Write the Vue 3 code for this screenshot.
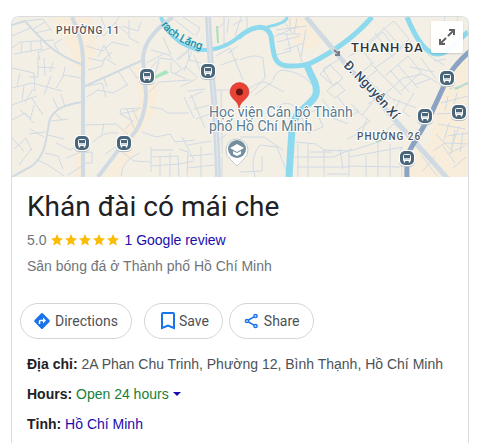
<template>
  <main class="panel">
    <div class="map">
      <svg class="map-canvas" viewBox="12 17 456 160" preserveAspectRatio="xMidYMid slice" role="img" aria-label="Map">
        <rect x="12" y="17" width="456" height="160" fill="#f4efe5" />
        <g fill="#f8edda">
          <path d="M52 17h40l5 35-15 25-12-25zM133 66l25 10-2 35-22 28-14-5 20-30zM75 150l10-4 2 31h-12zM102 177l25-30 8 5-18 25z" />
          <path d="M285 17h25l15 22-16 12-15-9zM448 73l20-14v118h-50l12-39zM400 177l5-30 22 2 25 28z" />
        </g>
        <path d="M154 76l12-6 3 3-14 6z" fill="#a5e6be" />
        <path d="M376 142l6-2M217 26l1 17M455 89l13-6" fill="none" stroke="#a5dfbb" stroke-width="2" />
        <g class="lane">
          <path v-for="(lane, index) in lanes" :key="index" :d="lane" />
        </g>
        <g class="water">
          <path d="M161 17Q166 33 180 42T209 50Q226 48 240 36" stroke-width="4" />
          <path d="M238 38C249 28 266 21 271 36C274 51 271 67 292 66Q304 66 311 63C327 55 350 42 372 17" stroke-width="5" />
          <path d="M267 27Q287 23 287 17" stroke-width="3" />
          <path d="M307 65C311 77 318 84 316 94S294 110 292 129L289 177" stroke-width="7" />
          <path d="M407 17C414 34 424 54 437 54S455 42 468 32" stroke-width="5" />
        </g>
        <g class="road">
          <path d="M12 25L25 21C41 39 53 54 83 65M83 87L143 60M12 177L32 166C48 153 46 133 50 119Q56 105 83 102" stroke-width="2" />
          <path d="M72 17Q84 42 83 64V177M173 17C155 29 144 42 143 58L146 95C145 119 137 134 123 144L98 177" stroke-width="4" />
          <path d="M208 17L211 70Q216 110 218 177" stroke-width="6" />
          <path d="M306 17L343 61L394 119L449 180" stroke-width="5" />
        </g>
        <path d="M208 17l3 53q5 40 7 107" fill="none" stroke="#e3e8ec" />
        <path class="highway" d="M470 51Q454 65 448 77L431 114L411 148Q406 156 407 177" />
        <path d="M334 50l5 4m0-3v4h-4" fill="none" stroke="#778088" stroke-width="2" />

        <g v-for="(stop, index) in busStops" :key="index" :transform="`translate(${stop.x} ${stop.y})`">
          <rect x="-8" y="-7" width="16" height="16" rx="5" fill="#b5c0c6" />
          <rect x="-8" y="-8" width="16" height="16" rx="5" fill="#fff" />
          <rect x="-7" y="-7" width="14" height="14" rx="5" fill="#49657a" />
          <path d="M-3.500 2.500v-5q0-1 1-1h5q1 0 1 1v5z" fill="#49657a" stroke="#fff" />
          <path d="M-3 1h6M-2.500 3v1.500M2.500 3v1.500" stroke="#fff" stroke-width="1.500" />
        </g>

        <g class="district">
          <text x="56" y="34">PHƯỜNG 11</text>
          <text x="357" y="140">PHƯỜNG 26</text>
          <text class="district-large" x="351" y="52">THANH ĐA</text>
        </g>
        <defs>
          <path id="canal-name" d="M161 25Q174 43 205 51" />
          <path id="street-name" d="M343 66L367 90L404 132" />
        </defs>
        <text class="canal-label"><textPath href="#canal-name">rach Lăng</textPath></text>
        <text class="street-label"><textPath href="#street-name">Đ. Nguyễn Xí</textPath></text>

        <path d="M237 166l-7-7q-4-3-4-9a11 11 0 0 1 22 0q0 6-4 9z" fill="#fff" stroke="#c5cbcd" />
        <circle cx="237" cy="149" r="9" fill="#738f9e" />
        <path d="M230 148l7-4 7 4-7 4z" fill="#fff" />
        <path d="M233 151v3l4 2 4-2v-3l-4 2z" fill="#fff" />
        <text class="place-label">
          <tspan x="209" y="117">Học viện Cán bộ Thành</tspan>
          <tspan x="209" y="131">phố Hồ Chí Minh</tspan>
        </text>
        <path d="M239 108c-1-8-9-9-9-16a9.500 9.500 0 0 1 19 0c0 7-8 8-10 16z" fill="#ea4335" stroke="#c5221f" stroke-width=".5" />
        <circle cx="239.500" cy="92" r="3.500" fill="#65140f" />
      </svg>
      <button class="expand" type="button" aria-label="Expand map">
        <svg viewBox="0 0 18 18" width="18" height="18" fill="none" stroke="#5f6368" stroke-width="2">
          <path d="M11 2h5v5M16 2l-6 6M2 11v5h5M2 16l6-6" />
        </svg>
      </button>
    </div>

    <header class="heading">
      <h1>Khán đài có mái che</h1>
      <div class="rating">
        <span>5.0</span>
        <span class="stars" role="img" aria-label="5 stars">
          <svg v-for="n in 5" :key="n" viewBox="0 0 14 14" width="14" height="14">
            <path d="M7 1l1.800 4 4.200.4-3.200 2.800 1 4.300L7 10.200l-3.800 2.300 1-4.300L1 5.400 5.200 5z" fill="#fbbc04" />
          </svg>
        </span>
        <a href="#reviews">1 Google review</a>
      </div>
      <p class="category">Sân bóng đá ở Thành phố Hồ Chí Minh</p>
    </header>

    <div class="actions">
      <button class="action directions" type="button">
        <svg viewBox="0 0 18 18" width="18" height="18">
          <path d="M8 1.600q1-1 2 0L16.400 8q1 1 0 2L10 16.400q-1 1-2 0L1.600 10q-1-1 0-2z" fill="#1a73e8" />
          <path d="M6.500 12V9.500q0-1 1-1H11" fill="none" stroke="#fff" stroke-width="1.500" />
          <path d="M10 5.500l3 3-3 3z" fill="#fff" />
        </svg>
        Directions
      </button>
      <button class="action save" type="button">
        <svg viewBox="0 0 14 18" width="14" height="18">
          <path d="M1 2q0-1 1-1h10q1 0 1 1v14l-6-2.500L1 16z" fill="none" stroke="#1a73e8" stroke-width="2" />
        </svg>
        Save
      </button>
      <button class="action share" type="button">
        <svg viewBox="0 0 16 18" width="16" height="18" fill="none" stroke="#1a73e8" stroke-width="1.500">
          <path d="M4.500 8L10 4.800M4.500 10l5.500 3.200" />
          <circle cx="3" cy="9" r="1.600" />
          <circle cx="11.500" cy="4" r="1.600" />
          <circle cx="11.500" cy="14" r="1.600" />
        </svg>
        Share
      </button>
    </div>

    <div class="details">
      <p><b>Địa chỉ:</b> 2A Phan Chu Trinh, Phường 12, Bình Thạnh, Hồ Chí Minh</p>
      <p><b>Hours:</b> <button class="hours" type="button">Open 24 hours<i class="caret"></i></button></p>
      <p><b>Tỉnh:</b> <a href="#province">Hồ Chí Minh</a></p>
    </div>
  </main>
</template>

<script setup>
const busStops = [
  { x: 147, y: 76 },
  { x: 208, y: 71 },
  { x: 82, y: 143 },
  { x: 124, y: 143 },
  { x: 447, y: 78 },
  { x: 425, y: 116 },
  { x: 459, y: 112 },
  { x: 407, y: 158 },
];

const lanes = [
  // north-west
  "M12 48l8-6 34-2M14 54l28-5-2-8M22 43l-1 10M31 42v10M12 36l18-8M25 21l18-2 9 12M50 48l-12 4 2 8M60 54l-6-10 8-5M33 29l12-7M36 33l15-4",
  "M12 68l22 5 1 18M38 57v20h-9M38 67l17 1M44 58l1 18M53 62l-3 10M12 88l20-5 30 8M20 73l-3 13M24 86l-2 14M56 88l8-13 17 3M65 67l-2 10M44 95l7-19M12 105l25-9",
  "M92 28l12 8 11-13 13 11M101 17l4 10-9 11M115 23l4-6M86 46l17 5 9-9 17 4M98 57l6-12 7 14M88 58l14 3 10-9M129 20v18l10 5M122 26l16 5 3-9M88 70l14-4 3-8 11 7",
  // centre west
  "M88 86l14-3 4 14M104 78l3 9M119 72l9 14M129 67l8 11 7-3M87 97l11-7 15 3 14-8M151 50l18 5 12 13M147 63l16-9M151 68l9-10 13 2M149 92l10-10 32-2M159 61l-4 13M171 62v10l15 7M176 60l13-11",
  "M121 109l20-1M121 109l-1 5 13 7-8 8M127 109l7 20M132 108l7 15M120 114l18-4M150 107l12 2 6 4h21M142 132l14 5 14-3 5 8 20-2M151 147v25M151 150h22M160 157v20M151 157l27-1 1 21M170 153v24M151 166l28-2",
  "M179 149l9 3-1 25M182 137l12 23M188 145l23-4M188 156l25-2M187 168l28-3M201 146v31M179 164l15-3M122 152l12 9 17 1M121 176q1-16 19-23M105 154l17-11M83 125l33-1 12 10M93 142q10-11 25-9M104 123l-2 11",
  // south west
  "M12 120l13-7 9 10M20 110l9 8M31 97l12 18M34 105l-4 15M25 102l8-13M14 149l12-11 6 13M19 165l12-16M37 160l11 5 16 11M45 153l13 3 5 13M56 143l14 7 13-7M51 121l17-2M48 135l16 4M54 112l9 9M58 109l-5-11M65 107l-4-13M29 134l16-2M30 129l14 8M66 158l15-6M68 175l14-9M83 153l9-1v11h-9M12 138l12 13",
  // canal banks
  "M163 37l8 18M175 20l19 15M183 17l17 11-4 8M188 45l1 15 12 3M178 60l13-11 8 4M184 71l8-20M194 55l7 18M174 74l12-7 12 11M180 87l16-8M189 98l14-7M184 97l10 21M191 95l14 33M188 91l17-2M196 119l14-5M194 109l16-4",
  "M224 17v29M229 18l-2 15M216 30l8-7M233 25l10-5M216 56l14-8 13 32M228 53l10-7M221 65l17-6M215 90h25M221 91l1 48M215 143l12-9M222 154v-15M222 177v-20M241 17l-6 19M247 17v11",
  "M274 37l24-11M276 30l31-4M282 19l10 14M290 18v13M297 18l-3 16M276 55l15-4-5-18M284 50l20-7M297 45l5 17M306 29l-5 28M278 34h23M277 42l23-6M273 80q2-8 9-10 21 2 29 14M240 60q15-7 23-2l2 20-14 15M273 81l-18 14M241 96q15-15 24-14l19 10",
  "M255 177q-6-20 5-32l17 2 12 30M240 137h24l19 13M240 172l22-1v-15M277 107q11-8 19 1l-4 12-12-8M301 116l15-6 7 17-15 6zM295 142l21 2 8 6 25 1M298 144v33M308 143v34M324 149v28M349 151v26M295 157h38l19-8M297 167h53M310 152h22M327 174h21M340 149l3 20",
  // east
  "M338 60l-15 9 9 15M320 74l10-9 13 13-9 8zM327 91l10-9 8 8-10 8zM322 99l10 13M337 96l11 14M348 57l13-8 12 14-18 15M363 46l31-25 15 18-12 12-14-19-18 15M383 27l18 20M375 33l18 25",
  "M398 51l13-10M375 68l25-18M385 76l23-20 13 16-20 19M370 63l32 32M361 72l28 28M360 84l17-14M380 99l24-22M398 65l20 23M390 70l19 22M368 104l18-10 9 7M346 119l13-8-8-7M354 109l16 12-14 10M362 115l10-12M333 118l15 6",
  "M347 139l15-7 5-13M359 138l10-5M349 157l54-10M349 166l51 1M366 156v21M378 143v34M390 144v33M401 148l1 29M350 151l44-14M382 136l11-12 16 10M414 93l-11 18 7 6M393 99l23 9M400 100l-8 15M404 78l19-4 15 9M410 67l24 5M414 85l16-6M421 58l15 21M428 55l16 10",
  "M445 17l-5 30M458 17l-7 30M434 61l12-2M449 89l19-5M441 103l27-7M437 114l19-1M448 96l-3 15M457 93l-4 15M438 124l27 5M449 123l-5 17M459 126l-7 20M436 134l17 18M421 155l17 22M433 151l12-8 23 1M447 136l21-3M443 146l12 17M449 153l16-7M453 168l13-11M435 156l-12 15M455 130l-4 24M463 132l-3 20",
];
</script>

<style scoped>
.panel {
  box-sizing: border-box;
  min-height: calc(100vh - 16px);
  margin: 16px 11px 0;
  border: 1px solid #dadce0;
  border-bottom: 0;
  border-radius: 8px 8px 0 0;
  overflow: hidden;
  font: 14px/20px "Liberation Sans", Arial, sans-serif;
  color: #4d5156;
  background: #fff;
}
.map {
  position: relative;
  height: 160px;
}
.map-canvas {
  display: block;
  width: 100%;
  height: 100%;
}
.lane {
  fill: none;
  stroke: #cfdae4;
  stroke-width: 1;
}
.water {
  fill: none;
  stroke: #8dd9ee;
}
.road {
  fill: none;
  stroke: #d0dae3;
}
.highway {
  fill: none;
  stroke: #8ba3c2;
  stroke-width: 5;
}
.map text {
  font-family: Roboto, sans-serif;
  paint-order: stroke;
  stroke: #fff;
  stroke-width: 2px;
  stroke-linejoin: round;
}
.district {
  font-size: 10px;
  font-weight: 500;
  letter-spacing: 1px;
  fill: #50565c;
}
.district .district-large {
  font-size: 13px;
  fill: #32373c;
}
.canal-label {
  font-size: 11px;
  fill: #138398;
}
.map .canal-label {
  stroke: #a8e2ee;
  stroke-width: 1px;
}
.street-label {
  font-size: 13px;
  font-weight: 500;
  fill: #344b60;
}
.place-label {
  font-size: 14px;
  fill: #5b7d8e;
}
.expand {
  position: absolute;
  top: 4px;
  right: 5px;
  display: flex;
  align-items: center;
  justify-content: center;
  width: 32px;
  height: 32px;
  padding: 0;
  border: 0;
  border-radius: 2px;
  background: rgba(255, 255, 255, 0.95);
  box-shadow: 0 1px 2px rgba(0, 0, 0, 0.15);
}
.heading {
  padding: 12px 15px 0;
}
h1 {
  margin: 0;
  font: 400 28px/36px Roboto, sans-serif;
  color: #202124;
}
.rating {
  display: flex;
  align-items: center;
  gap: 4px;
  margin-top: 5px;
  color: #70757a;
}
.stars {
  display: flex;
}
a {
  color: #1a0dab;
  text-decoration: none;
}
.category {
  margin: 6px 0 0;
  color: #70757a;
}
.actions {
  display: flex;
  padding: 27px 8px 0;
}
.action {
  display: flex;
  align-items: center;
  gap: 4px;
  height: 36px;
  padding: 0 13px 0 12px;
  border: 1px solid #d2d5d9;
  border-radius: 18px;
  background: #fff;
  color: #4d5156;
  font: 14px/20px Roboto, sans-serif;
}
.save {
  margin: 0 6px 0 12px;
  padding-left: 16px;
}
.share {
  padding-left: 14px;
}
.details {
  padding: 15px 15px 0;
}
.details p {
  margin: 0 0 10px;
}
b {
  color: #202124;
}
.hours {
  padding: 0;
  border: 0;
  background: none;
  color: #188038;
  font: inherit;
}
.caret {
  display: inline-block;
  margin-left: 4px;
  border: 4px solid transparent;
  border-top-color: #1a0dab;
  border-bottom: 0;
  vertical-align: 3px;
}
</style>
